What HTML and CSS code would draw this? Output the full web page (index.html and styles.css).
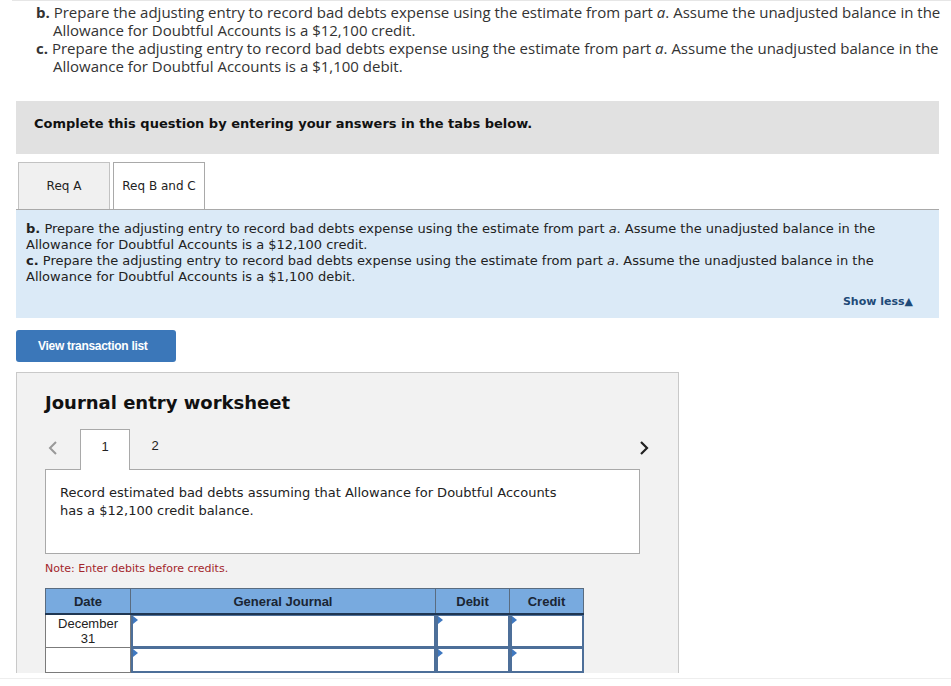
FILE: index.html
```html
<!DOCTYPE html>
<html lang="en">

<head>
    <meta charset="UTF-8">
    <meta name="viewport" content="width=device-width, initial-scale=1.0">
    <title>Req B and C</title>
    <link rel="stylesheet" href="styles.css">
</head>

<body>
    <div class="page">
        <div class="prompt">
            <p class="req"><b>b.</b> Prepare the adjusting entry to record bad debts expense using the estimate from part <i>a</i>. Assume the unadjusted balance in the Allowance for Doubtful Accounts is a $12,100 credit.</p>
            <p class="req"><b>c.</b> Prepare the adjusting entry to record bad debts expense using the estimate from part <i>a</i>. Assume the unadjusted balance in the Allowance for Doubtful Accounts is a $1,100 debit.</p>
        </div>

        <div class="main">
            <div class="banner">Complete this question by entering your answers in the tabs below.</div>

            <div class="tabs">
                <div class="tab-header">
                    <span class="tab-item">Req A</span>
                    <span class="tab-item active">Req B and C</span>
                </div>
                <div class="tab-panel">
                    <p><b>b.</b> Prepare the adjusting entry to record bad debts expense using the estimate from part <i>a</i>. Assume the unadjusted balance in the Allowance for Doubtful Accounts is a $12,100 credit.<br>
                    <b>c.</b> Prepare the adjusting entry to record bad debts expense using the estimate from part <i>a</i>. Assume the unadjusted balance in the Allowance for Doubtful Accounts is a $1,100 debit.</p>
                    <div class="show-less">Show less&#9650;</div>
                </div>
            </div>

            <button class="btn">View transaction list</button>

            <div class="worksheet">
                <h2>Journal entry worksheet</h2>
                <div class="ws-nav">
                    <span class="arrow prev">
                        <svg width="10" height="16" viewBox="0 0 10 16"><path d="M8 2 L2 8 L8 14" fill="none" stroke="#999" stroke-width="2"/></svg>
                    </span>
                    <span class="ws-tab active">1</span>
                    <span class="ws-tab">2</span>
                    <span class="arrow next">
                        <svg width="10" height="16" viewBox="0 0 10 16"><path d="M2 2 L8 8 L2 14" fill="none" stroke="#222" stroke-width="2.2"/></svg>
                    </span>
                </div>
                <div class="ws-content">
                    Record estimated bad debts assuming that Allowance for Doubtful Accounts has a $12,100 credit balance.
                </div>
                <div class="note">Note: Enter debits before credits.</div>

                <table class="journal">
                    <thead>
                        <tr>
                            <th class="c-date">Date</th>
                            <th class="c-gj">General Journal</th>
                            <th class="c-num">Debit</th>
                            <th class="c-num">Credit</th>
                        </tr>
                    </thead>
                    <tbody>
                        <tr class="tall">
                            <td class="date">December<br>31</td>
                            <td><div class="cell"></div></td>
                            <td><div class="cell"></div></td>
                            <td><div class="cell"></div></td>
                        </tr>
                        <tr>
                            <td class="date"></td>
                            <td><div class="cell"></div></td>
                            <td><div class="cell"></div></td>
                            <td><div class="cell"></div></td>
                        </tr>
                        <tr>
                            <td class="date"></td>
                            <td><div class="cell"></div></td>
                            <td><div class="cell"></div></td>
                            <td><div class="cell"></div></td>
                        </tr>
                    </tbody>
                </table>
            </div>
        </div>
    </div>
    <div class="cut"></div>
</body>

</html>
```

FILE: styles.css
```css
body {
    margin: 0;
    background: #fff;
    color: #222;
}

.page {
    height: 673px;
    overflow: hidden;
}

.cut {
    margin-top: 5px;
    border-top: 1px solid #eee;
}

/* question text on top */
.prompt {
    margin-left: 12px;
    padding-top: 2px;
    border-top: 1px solid #e6e6e6;
    font-family: "Open Sans", "Lato", sans-serif;
    font-size: 15px;
    line-height: 18px;
    color: #333;
}

.prompt .req {
    margin: 0;
    padding-left: 41px;
    text-indent: -17px;
}

.main {
    margin: 26px 0 0 16px;
    width: 923px;
    font-family: "DejaVu Sans", Verdana, sans-serif;
}

.banner {
    background: #e1e1e1;
    padding: 0 18px;
    height: 53px;
    line-height: 45px;
    font-size: 13px;
    font-weight: bold;
    color: #111;
}

.tabs {
    margin-top: 8px;
}

.tabs .tab-header {
    display: flex;
    gap: 3px;
    padding-left: 2px;
    border-bottom: 1px solid #a9a9a9;
}

.tabs .tab-item {
    width: 90px;
    height: 46px;
    line-height: 46px;
    text-align: center;
    font-size: 12px;
    color: #222;
    background: #f0f0f0;
    border: 1px solid #c2c2c2;
    border-bottom: none;
}

.tabs .tab-item.active {
    background: #fff;
    border-color: #a9a9a9;
}

.tabs .tab-panel {
    background: #dbeaf7;
    padding: 11px 10px 9px;
    font-size: 13px;
    line-height: 16px;
    color: #222;
}

.tab-panel p {
    margin: 0;
}

.show-less {
    margin-top: 10px;
    padding-right: 16px;
    text-align: right;
    font-size: 11px;
    line-height: 14px;
    font-weight: bold;
    color: #1f4a78;
}

.btn {
    display: block;
    margin-top: 12px;
    width: 160px;
    height: 32px;
    border: none;
    border-radius: 3px;
    background: #3b77b9;
    color: #fff;
    font-family: "Liberation Sans", Arial, sans-serif;
    font-size: 12px;
    font-weight: bold;
    letter-spacing: -0.3px;
    text-align: left;
    padding-left: 22px;
}

.worksheet {
    margin-top: 10px;
    width: 633px;
    padding: 0 0 20px 28px;
    background: #f2f2f2;
    border: 1px solid #c9c9c9;
}

.worksheet h2 {
    margin: 0;
    padding-top: 18px;
    font-size: 18px;
    line-height: 24px;
    color: #111;
}

.ws-nav {
    display: flex;
    align-items: center;
    margin-top: 14px;
    width: 604px;
    height: 40px;
}

.arrow {
    display: flex;
    align-items: center;
}

.arrow.prev {
    margin: 0 0 2px 3px;
    width: 32px;
}

.arrow.next {
    margin-left: auto;
    margin-bottom: 2px;
}

.ws-tab {
    position: relative;
    z-index: 1;
    width: 50px;
    height: 40px;
    line-height: 34px;
    text-align: center;
    font-family: "Liberation Sans", Arial, sans-serif;
    font-size: 13px;
    color: #222;
    box-sizing: border-box;
}

.ws-tab.active {
    background: #fff;
    border: 1px solid #a9a9a9;
    border-bottom: none;
    height: 41px;
    margin-bottom: -1px;
}

.ws-content {
    width: 595px;
    height: 85px;
    box-sizing: border-box;
    padding: 14px 70px 14px 14px;
    background: #fff;
    border: 1px solid #a9a9a9;
    font-size: 13px;
    line-height: 18px;
    color: #222;
}

.note {
    margin-top: 8px;
    font-size: 11px;
    color: #a3262b;
}

.journal {
    margin-top: 13px;
    border-collapse: collapse;
    font-family: "Liberation Sans", Arial, sans-serif;
    font-size: 13px;
}

.journal th {
    height: 24px;
    padding: 0;
    background: #78aadf;
    color: #1a2533;
    font-weight: bold;
    font-size: 13px;
    border: 1px solid #5a6c80;
    border-bottom: 2px solid #1f3652;
}

.journal .c-date { width: 84px; }
.journal .c-gj { width: 304px; }
.journal .c-num { width: 73px; }

.journal td {
    padding: 0;
    height: 30px;
    background: #fff;
    vertical-align: top;
}

.journal td.date {
    border: 1px solid #7b7b7b;
    border-top: none;
    text-align: center;
    font-size: 13px;
    line-height: 15px;
    color: #222;
    padding-top: 1px;
}

.journal tr.tall td {
    height: 31px;
}

.journal tr + tr td {
    height: 23px;
}

.cell {
    position: relative;
    height: 100%;
    box-sizing: border-box;
    border: 2px solid #4d6f99;
    border-top-width: 1px;
    margin-bottom: 1px;
}

.cell::before {
    content: "";
    position: absolute;
    left: 0;
    top: 0;
    border-left: 5px solid #3f78c0;
    border-top: 4px solid transparent;
    border-bottom: 4px solid transparent;
}
```
